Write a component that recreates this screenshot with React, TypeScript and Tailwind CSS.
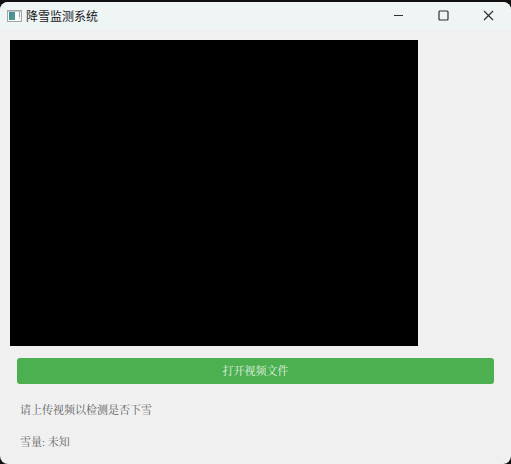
import { useRef, useState } from "react";
import type { ChangeEvent, ReactNode } from "react";

export default function App() {
  const inputRef = useRef<HTMLInputElement>(null);
  const [videoUrl, setVideoUrl] = useState("");

  const handleFile = (event: ChangeEvent<HTMLInputElement>) => {
    const file = event.target.files?.[0];
    if (file) {
      setVideoUrl(URL.createObjectURL(file));
    }
  };

  return (
    <div className="min-h-screen bg-[#101010] pt-0.5">
      <div className="flex min-h-[calc(100vh-2px)] flex-col overflow-hidden rounded-lg bg-[#f0f0f0]">
        <TitleBar title="降雪监测系统" />
        <main className="flex flex-col px-2.5 pt-2.5 font-['Liberation_Serif','Noto_Serif_CJK_SC','Noto_Sans_CJK_SC',serif] text-[11px] leading-4 text-[#606060]">
          <video className="aspect-4/3 w-[408px] max-w-full bg-black" src={videoUrl || undefined} />
          <input ref={inputRef} type="file" accept="video/*" aria-label="打开视频文件" className="hidden" onChange={handleFile} />
          <button
            type="button"
            className="mx-[7px] mt-3 h-[26px] rounded-[3px] bg-[#4caf50] text-[#e4f4e4] hover:bg-[#45a049]"
            onClick={() => inputRef.current?.click()}
          >
            打开视频文件
          </button>
          <div className="flex flex-col gap-4 px-2.5 pt-[18px] pb-3">
            <p>请上传视频以检测是否下雪</p>
            <p>雪量: 未知</p>
          </div>
        </main>
      </div>
    </div>
  );
}

function TitleBar({ title }: { title: string }) {
  return (
    <header className="flex h-7 items-center justify-between bg-[#eff4f5] pb-px pl-[7px]">
      <div className="flex items-center gap-1">
        <AppIcon />
        <h1 className="font-['Noto_Sans_CJK_SC',sans-serif] text-[12px] leading-4 text-[#181818]">{title}</h1>
      </div>
      <div className="flex h-full">
        <WindowButton label="最小化">
          <path d="M1 5.5h9" />
        </WindowButton>
        <WindowButton label="最大化">
          <rect x="1" y="1" width="9" height="9" rx="1" />
        </WindowButton>
        <WindowButton label="关闭">
          <path d="M1 1l9 9M10 1l-9 9" />
        </WindowButton>
      </div>
    </header>
  );
}

function WindowButton({ label, children }: { label: string; children: ReactNode }) {
  return (
    <button type="button" aria-label={label} className="flex w-[45px] items-center justify-center text-[#303030] hover:bg-black/5">
      <svg width="11" height="11" viewBox="0 0 11 11" fill="none" stroke="currentColor" strokeWidth="1.2">
        {children}
      </svg>
    </button>
  );
}

function AppIcon() {
  return (
    <svg width="15" height="12" viewBox="0 0 15 12" aria-hidden="true">
      <defs>
        <linearGradient id="screen" x1="0" y1="0" x2="1" y2="1">
          <stop offset="0" stopColor="#3f83a6" />
          <stop offset="1" stopColor="#4fa583" />
        </linearGradient>
      </defs>
      <rect x="0.5" y="0.5" width="14" height="11" fill="#f8f8f8" stroke="#a0a5a8" />
      <path d="M1 1.5h13" stroke="#c3c7ca" />
      <rect x="2" y="2" width="6" height="8" fill="url(#screen)" />
      <rect x="9" y="2" width="2" height="8" fill="#ffffff" />
      <rect x="12" y="2" width="1" height="5" fill="#8aa9bd" />
      <rect x="12" y="7" width="1" height="3" fill="#dfe3e5" />
    </svg>
  );
}
